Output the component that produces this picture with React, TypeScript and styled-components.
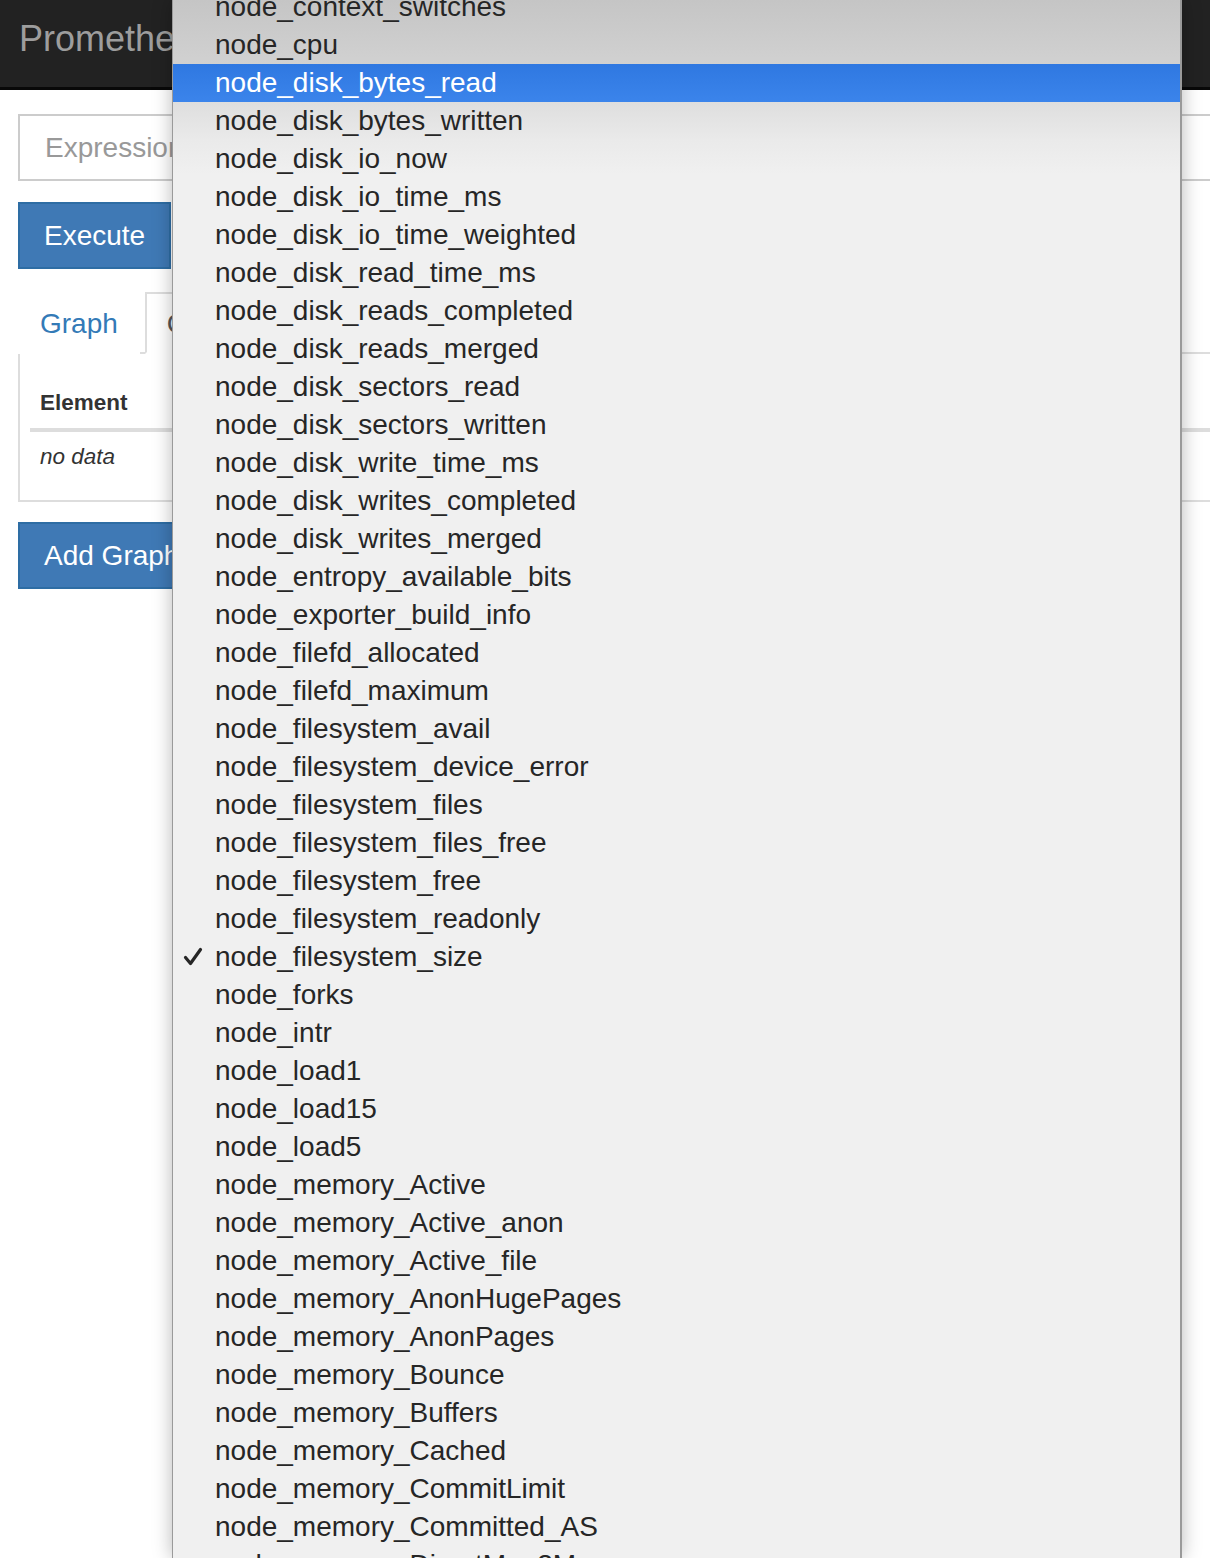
import React from "react";
import styled, { createGlobalStyle } from "styled-components";

const Global = createGlobalStyle`
  html, body { margin: 0; padding: 0; background: #fff; }
  body { font-family: "Liberation Sans", Arial, Helvetica, sans-serif; color: #333; }
  * { box-sizing: border-box; }
`;

const Page = styled.div`
  position: relative;
  width: 1210px;
  height: 1558px;
  overflow: hidden;
  background: #fff;
`;

const Navbar = styled.header`
  height: 90px;
  background: #222;
  border-bottom: 3px solid #080808;
  display: flex;
  align-items: center;
  padding-left: 19px;
`;

const Brand = styled.span`
  font-size: 36px;
  color: #9d9d9d;
  line-height: 1;
  margin-top: -10px;
`;

const Content = styled.main`
  display: flex;
  flex-direction: column;
  align-items: flex-start;
  padding: 24px 0 0 18px;
`;

const ExprInput = styled.div`
  width: 1300px;
  height: 67px;
  border: 2px solid #ccc;
  display: flex;
  align-items: center;
  padding-left: 25px;
  font-size: 28px;
  color: #999;
`;

const Button = styled.div<{ $mt: number }>`
  margin-top: ${(p) => p.$mt}px;
  height: 67px;
  display: flex;
  align-items: center;
  padding: 0 24px;
  background: #3f79b5;
  border: 2px solid #2e6da4;
  color: #fff;
  font-size: 28px;
`;

const Tabs = styled.div`
  margin-top: 23px;
  width: 1300px;
  display: flex;
  align-items: flex-end;
  border-bottom: 2px solid #ddd;
`;

const Tab = styled.div<{ $active?: boolean }>`
  height: 62px;
  margin-bottom: -2px;
  margin-right: 5px;
  padding: 2px 20px 0;
  display: flex;
  align-items: center;
  font-size: 28px;
  border: 2px solid ${(p) => (p.$active ? "#ddd" : "transparent")};
  border-bottom-color: ${(p) => (p.$active ? "#fff" : "transparent")};
  background: #fff;
  color: ${(p) => (p.$active ? "#555" : "#337ab7")};
`;

const Panel = styled.div`
  width: 1300px;
  border: 2px solid #ddd;
  border-top: none;
  padding: 10px 10px 18px;
`;

const Table = styled.div`
  display: flex;
  flex-direction: column;
  font-size: 22.5px;
`;

const HeadCell = styled.div`
  padding: 25px 10px 11px;
  line-height: 28px;
  font-weight: bold;
  color: #333;
  border-bottom: 4px solid #ddd;
`;

const BodyCell = styled.div`
  padding: 11px 10px;
  line-height: 28px;
  font-style: italic;
  color: #333;
`;

const Menu = styled.div`
  position: absolute;
  top: 0;
  bottom: 0;
  left: 172px;
  width: 1010px;
  overflow: hidden;
  background: linear-gradient(
    to bottom,
    #c5c5c5 0px,
    #d1d1d1 64px,
    #dedede 102px,
    #eaeaea 140px,
    #f0f0f0 175px,
    #f0f0f0 100%
  );
  border-left: 1px solid #9a9a9a;
  border-right: 2px solid #9a9a9a;
  box-shadow: 0 0 18px rgba(0, 0, 0, 0.28);
`;

const MenuList = styled.ul`
  list-style: none;
  margin: -12px 0 0;
  padding: 0;
`;

const MenuItem = styled.li<{ $selected?: boolean }>`
  position: relative;
  height: 38px;
  display: flex;
  align-items: center;
  padding-left: 42px;
  font-size: 28px;
  color: ${(p) => (p.$selected ? "#fff" : "#262626")};
  background: ${(p) =>
    p.$selected ? "linear-gradient(to bottom, #2f78e1, #3b84eb)" : "transparent"};
  white-space: nowrap;
`;

const Check = styled.svg`
  position: absolute;
  left: 10px;
  top: 9px;
  width: 20px;
  height: 20px;
`;

const items = [
  "node_context_switches",
  "node_cpu",
  "node_disk_bytes_read",
  "node_disk_bytes_written",
  "node_disk_io_now",
  "node_disk_io_time_ms",
  "node_disk_io_time_weighted",
  "node_disk_read_time_ms",
  "node_disk_reads_completed",
  "node_disk_reads_merged",
  "node_disk_sectors_read",
  "node_disk_sectors_written",
  "node_disk_write_time_ms",
  "node_disk_writes_completed",
  "node_disk_writes_merged",
  "node_entropy_available_bits",
  "node_exporter_build_info",
  "node_filefd_allocated",
  "node_filefd_maximum",
  "node_filesystem_avail",
  "node_filesystem_device_error",
  "node_filesystem_files",
  "node_filesystem_files_free",
  "node_filesystem_free",
  "node_filesystem_readonly",
  "node_filesystem_size",
  "node_forks",
  "node_intr",
  "node_load1",
  "node_load15",
  "node_load5",
  "node_memory_Active",
  "node_memory_Active_anon",
  "node_memory_Active_file",
  "node_memory_AnonHugePages",
  "node_memory_AnonPages",
  "node_memory_Bounce",
  "node_memory_Buffers",
  "node_memory_Cached",
  "node_memory_CommitLimit",
  "node_memory_Committed_AS",
  "node_memory_DirectMap2M",
];

export default function App() {
  return (
    <>
      <Global />
      <Page>
        <Navbar>
          <Brand>Prometheus</Brand>
        </Navbar>
        <Content>
          <ExprInput>Expression (press Shift+Enter for newlines)</ExprInput>
          <Button $mt={21}>Execute</Button>
          <Tabs>
            <Tab>Graph</Tab>
            <Tab $active>Console</Tab>
          </Tabs>
          <Panel>
            <Table>
              <HeadCell>Element</HeadCell>
              <BodyCell>no data</BodyCell>
            </Table>
          </Panel>
          <Button $mt={20}>Add Graph</Button>
        </Content>
        <Menu>
          <MenuList>
            {items.map((name) => (
              <MenuItem key={name} $selected={name === "node_disk_bytes_read"}>
                {name === "node_filesystem_size" && (
                  <Check viewBox="0 0 20 20">
                    <path
                      d="M2.5 10.5 L7.5 16.5 L17.5 2.5"
                      fill="none"
                      stroke="#262626"
                      strokeWidth="3.2"
                      strokeLinecap="round"
                      strokeLinejoin="round"
                    />
                  </Check>
                )}
                {name}
              </MenuItem>
            ))}
          </MenuList>
        </Menu>
      </Page>
    </>
  );
}
